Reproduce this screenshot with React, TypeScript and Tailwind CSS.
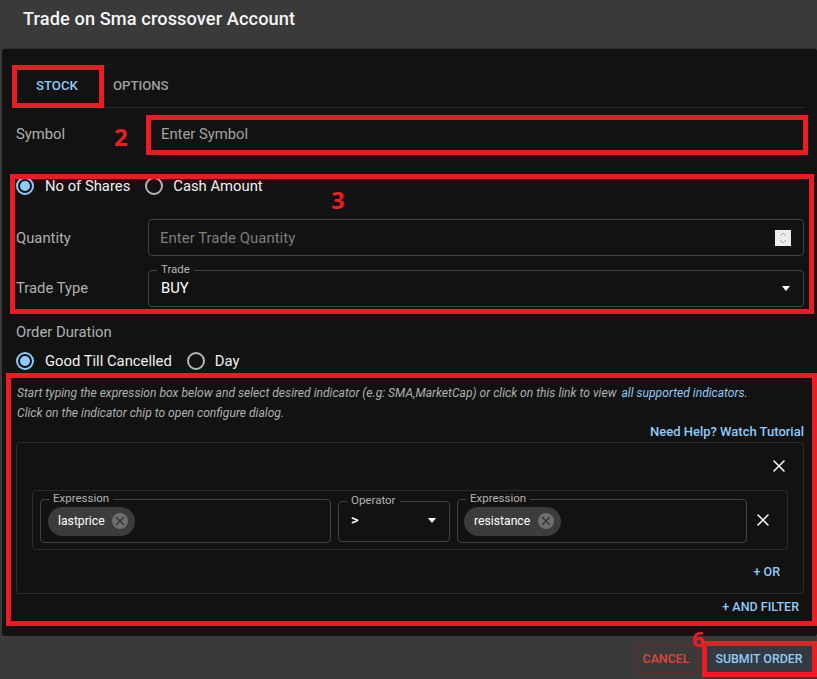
import React from "react";
import { X } from "lucide-react";

const Radio = ({ checked }: { checked?: boolean }) => (
  <span
    className={`flex h-[18px] w-[18px] shrink-0 items-center justify-center rounded-full border-2 ${
      checked ? "border-[#90caf9]" : "border-[#b5b5b5]"
    }`}
  >
    {checked && <span className="h-[10px] w-[10px] rounded-full bg-[#90caf9]" />}
  </span>
);

const Outlined = ({
  label,
  className,
  children,
}: {
  label: string;
  className: string;
  children: React.ReactNode;
}) => (
  <fieldset className={`rounded border border-[#424242] ${className}`}>
    <legend className="ml-[8px] px-[4px] pb-[2px] text-[11.5px] leading-[11px] text-[#b3b3b3]">{label}</legend>
    {children}
  </fieldset>
);

const Chip = ({ label, className }: { label: string; className: string }) => (
  <div className={`flex h-[29px] items-center justify-between rounded-full bg-[#3c3c3c] pl-[10px] pr-[7px] ${className}`}>
    <span className="text-[12.2px] text-white">{label}</span>
    <span className="flex h-[16px] w-[16px] items-center justify-center rounded-full bg-[#6f6f6f]">
      <X size={14} strokeWidth={2.2} className="text-[#333333]" />
    </span>
  </div>
);

const Caret = () => (
  <svg width="8" height="5" viewBox="0 0 8 5">
    <path d="M0 0h8L4 5z" fill="#ffffff" />
  </svg>
);

const App = () => {
  return (
    <div
      className="relative h-[679px] w-[817px] overflow-hidden bg-[#3a3a3a] text-white"
      style={{ fontFamily: "Roboto, sans-serif" }}
    >
      <header className="flex h-[48px] items-center pb-[11px] pl-[23px]">
        <h2 className="text-[18.2px] font-medium tracking-[0.1px] text-[#f5f5f5]">Trade on Sma crossover Account</h2>
      </header>

      <main className="ml-[2px] h-[588px] rounded-[3px] border-t border-[#2e2e2e] bg-[#121212] pl-[14px] pr-[13px]">
        {/* tabs */}
        <div className="flex h-[59px] items-center border-b border-[#2b2b2b] pt-[16px]">
          <span className="ml-[20px] text-[13.2px] font-medium text-[#90caf9]">STOCK</span>
          <span className="ml-[35px] text-[13.2px] font-medium text-[#a0a0a0]">OPTIONS</span>
        </div>

        <div className="flex h-[65px] items-start pt-[15px]">
          <span className="w-[145px] text-[14.8px] leading-[22px] text-[#b0b0b0]">Symbol</span>
          <span className="text-[14.8px] leading-[22px] text-[#a3a3a3]">Enter Symbol</span>
        </div>

        {/* quantity section */}
        <div className="flex h-[26px] items-center">
          <Radio checked />
          <span className="ml-[11px] text-[14.8px] text-[#f0f0f0]">No of Shares</span>
          <span className="ml-[15px]">
            <Radio />
          </span>
          <span className="ml-[10px] text-[14.8px] text-[#f0f0f0]">Cash Amount</span>
        </div>

        <div className="mt-[20px] flex items-center">
          <span className="w-[132px] text-[14.8px] leading-[22px] text-[#b0b0b0]">Quantity</span>
          <div className="flex h-[37px] w-[656px] items-center justify-between rounded border border-[#424242] pl-[11px] pr-[12px]">
            <span className="pt-[1px] text-[15px] text-[#7d7d7d]">Enter Trade Quantity</span>
            <span className="flex h-[16px] w-[16px] flex-col items-center justify-center bg-[#ececec]">
              <svg width="8" height="14" viewBox="0 0 8 14" fill="none" stroke="#a8a8a8" strokeWidth="1">
                <path d="M1 5l3-3 3 3M1 9l3 3 3-3" />
              </svg>
            </span>
          </div>
        </div>

        <div className="mt-[8px] flex items-end">
          <span className="w-[132px] pb-[8px] text-[14.8px] leading-[22px] text-[#b0b0b0]">Trade Type</span>
          <Outlined label="Trade" className="h-[43px] w-[656px]">
            <div className="flex h-[22px] items-center justify-between pl-[12px] pr-[13px]">
              <span className="text-[14.8px] text-white">BUY</span>
              <Caret />
            </div>
          </Outlined>
        </div>

        <div className="mt-[15px] text-[14.8px] leading-[20px] text-[#b0b0b0]">Order Duration</div>

        <div className="mt-[7px] flex h-[24px] items-center">
          <Radio checked />
          <span className="ml-[11px] text-[14.8px] text-[#f0f0f0]">Good Till Cancelled</span>
          <span className="ml-[15px]">
            <Radio />
          </span>
          <span className="ml-[10px] text-[14.8px] text-[#f0f0f0]">Day</span>
        </div>

        {/* filter section */}
        <p className="mt-[10px] pl-[1px] text-[12.1px] italic leading-[20px] text-[#b0b0b0]">
          Start typing the expression box below and select desired indicator (e.g: SMA,MarketCap) or click on this link to view{" "}
          <span className="ml-[2px] text-[#90caf9]">all supported indicators</span>.
        </p>
        <p className="pl-[1px] text-[12.1px] italic leading-[20px] text-[#b0b0b0]">Click on the indicator chip to open configure dialog.</p>

        <div className="text-right text-[13px] font-medium leading-[18px] text-[#90caf9]">
          Need Help? Watch Tutorial
        </div>

        <div className="mt-[1px] h-[152px] w-[788px] rounded border border-[#2b2b2b]">
          <div className="flex h-[47px] items-center justify-end pb-[2px] pr-[14px]">
            <X size={20} strokeWidth={1.8} className="text-white" />
          </div>
          <div className="mx-[15px] flex h-[60px] items-center rounded border border-[#2b2b2b] pl-[7px]">
            <Outlined label="Expression" className="-mt-[5px] h-[50px] w-[291px]">
              <div className="px-[7px] pt-[1px]">
                <Chip label="lastprice" className="w-[87px]" />
              </div>
            </Outlined>
            <Outlined label="Operator" className="ml-[7px] -mt-[4px] h-[47px] w-[112px]">
              <div className="flex h-[26px] items-center justify-between pl-[12px] pr-[13px]">
                <span className="text-[14.8px] font-medium text-white">&gt;</span>
                <Caret />
              </div>
            </Outlined>
            <Outlined label="Expression" className="ml-[7px] -mt-[5px] h-[50px] w-[290px]">
              <div className="px-[6px] pt-[1px]">
                <Chip label="resistance" className="w-[97px]" />
              </div>
            </Outlined>
            <X size={20} strokeWidth={1.8} className="ml-[6px] text-white" />
          </div>
          <div className="mt-[12px] pr-[23px] text-right text-[12.5px] font-medium leading-[20px] text-[#90caf9]">+ OR</div>
        </div>

        <div className="mt-[3px] pr-[5px] text-right text-[12.5px] font-medium leading-[20px] text-[#90caf9]">+ AND FILTER</div>
      </main>

      <footer className="flex h-[43px] items-center justify-end pr-[5px] pt-[3px]">
        <button className="h-[28px] w-[64px] rounded border border-[#6e2a28] text-[12.4px] font-medium text-[#e0453c]">
          CANCEL
        </button>
        <button className="ml-[8px] h-[26px] w-[106px] rounded bg-[#333a42] text-[12.4px] font-medium text-[#90caf9]">
          SUBMIT ORDER
        </button>
      </footer>

      {/* red annotations drawn over the screen */}
      <div className="absolute left-[12px] top-[65px] h-[43px] w-[92px] border-[5px] border-[#ed1c24]" />
      <div className="absolute left-[146px] top-[115px] h-[40px] w-[662px] border-[5px] border-[#ed1c24]" />
      <div className="absolute left-[10px] top-[174px] h-[140px] w-[804px] border-[5px] border-[#ed1c24]" />
      <div className="absolute left-[6px] top-[373px] h-[253px] w-[811px] border-[5px] border-[#ed1c24]" />
      <div className="absolute left-[702px] top-[641px] h-[36px] w-[115px] border-[5px] border-[#ed1c24]" />
      <span className="absolute left-[114px] top-[122px] text-[24px] font-bold leading-[30px] text-[#ed1c24]" style={{ fontFamily: "'Open Sans', sans-serif" }}>2</span>
      <span className="absolute left-[331px] top-[185px] text-[24px] font-bold leading-[30px] text-[#ed1c24]" style={{ fontFamily: "'Open Sans', sans-serif" }}>3</span>
      <span className="absolute left-[692px] top-[623px] text-[22px] font-bold leading-[30px] text-[#ed1c24]" style={{ fontFamily: "'Open Sans', sans-serif" }}>6</span>
    </div>
  );
};

export default App;
